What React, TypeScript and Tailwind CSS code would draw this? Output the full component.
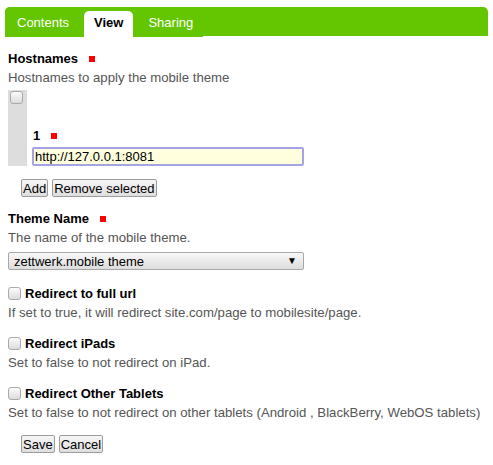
import React from "react";

const Req = () => <span className="inline-block w-[6px] h-[6px] bg-[#f00] ml-[11px] mb-[1px] align-baseline" />;

const Check = () => (
  <span className="inline-block w-[13px] h-[13px] rounded-[3px] border border-[#a9a9a9] bg-gradient-to-b from-[#fbfbfb] to-[#dcdcdc] shrink-0" />
);

const Btn = ({ children }: { children: React.ReactNode }) => (
  <button className="h-[18px] px-[1px] border border-[#9c9c9c] rounded-[2px] bg-gradient-to-b from-[#f6f6f6] to-[#dedede] text-[13px] leading-[15px] text-black">
    {children}
  </button>
);

const Desc = ({ children }: { children: React.ReactNode }) => (
  <div className="mt-[4px] text-[#555] text-[13.2px] leading-[15px]">{children}</div>
);

export default function App() {
  return (
    <div className="w-[493px] h-[465px] bg-white text-[13px] leading-[15px] text-[#1a1a1a]" style={{ fontFamily: '"Liberation Sans", Arial, sans-serif' }}>
      <div className="pt-[7px] px-[5px]">
        <div className="h-[29px] bg-[#63c600] rounded-t-[5px] flex">
          <div className="flex h-[30px] pl-[2px] pt-[4px] gap-[5px] bg-[#63c600] rounded-tl-[5px]">
            <div className="px-[10px] pt-[4px] text-white">Contents</div>
            <div className="px-[10px] pt-[4px] bg-white rounded-t-[5px] font-bold text-black">View</div>
            <div className="px-[10px] pt-[4px] text-white">Sharing</div>
          </div>
        </div>
      </div>

      <div className="px-[8px]">
        <div className="mt-[15px] font-bold text-black">Hostnames<Req /></div>
        <Desc>Hostnames to apply the mobile theme</Desc>

        <div className="mt-[5px] flex">
          <div className="w-[19px] bg-[#dddddd] pl-[2px] pt-[1px]">
            <Check />
          </div>
          <div className="pl-[5px] pt-[38px]">
            <div className="font-bold text-black pl-[1px]">1<Req /></div>
            <div className="mt-[4px] w-[272px] h-[19px] border-2 border-[#a4a4e4] rounded-[2px] bg-[#ffffde] text-black pl-[1px] leading-[15px]">
              http://127.0.0.1:8081
            </div>
          </div>
        </div>

        <div className="mt-[13px] ml-[13px] flex gap-[4px]">
          <Btn>Add</Btn>
          <Btn>Remove selected</Btn>
        </div>

        <div className="mt-[14px] font-bold text-black">Theme Name<Req /></div>
        <Desc>The name of the mobile theme.</Desc>
        <div className="mt-[7px] w-[296px] h-[18px] border border-[#a8a8a8] rounded-[2px] bg-gradient-to-b from-[#f8f8f8] to-[#dddddd] flex items-center justify-between pl-[5px] pr-[6px] text-black">
          <span>zettwerk.mobile theme</span>
          <span className="text-[10px] leading-[10px]">▼</span>
        </div>

        <div className="mt-[16px] flex items-center gap-[4px] font-bold text-black"><Check />Redirect to full url</div>
        <Desc>If set to true, it will redirect site.com/page to mobilesite/page.</Desc>

        <div className="mt-[16px] flex items-center gap-[4px] font-bold text-black"><Check />Redirect iPads</div>
        <Desc>Set to false to not redirect on iPad.</Desc>

        <div className="mt-[16px] flex items-center gap-[4px] font-bold text-black"><Check />Redirect Other Tablets</div>
        <Desc>Set to false to not redirect on other tablets (Android , BlackBerry, WebOS tablets)</Desc>

        <div className="mt-[15px] ml-[13px] flex gap-[4px]">
          <Btn>Save</Btn>
          <Btn>Cancel</Btn>
        </div>
      </div>
    </div>
  );
}
